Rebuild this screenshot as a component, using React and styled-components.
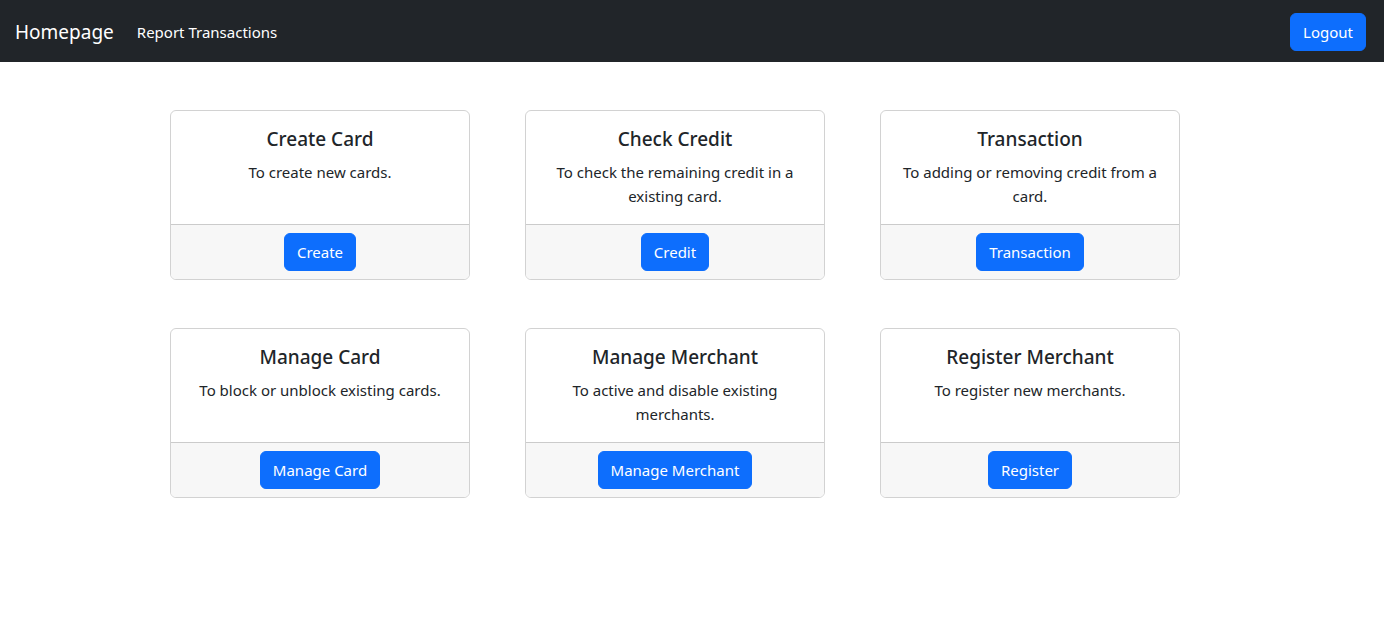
import React from "react";
import styled, { createGlobalStyle } from "styled-components";

const GlobalStyle = createGlobalStyle`
  body {
    margin: 0;
    background: #fff;
    color: #212529;
    font-family: "Noto Sans", "Open Sans", sans-serif;
    font-size: 15px;
    line-height: 24px;
  }
`;

const Navbar = styled.nav`
  height: 62px;
  background: #212529;
  display: flex;
  align-items: center;
  padding: 1px 18px 0 15px;
  box-sizing: border-box;
`;

const Brand = styled.a`
  color: #fff;
  font-size: 19px;
  line-height: 30px;
  text-decoration: none;
  margin-right: 23px;
`;

const NavLink = styled.a`
  color: #fff;
  font-size: 15px;
  text-decoration: none;
  flex: 1;
`;

const Button = styled.button`
  font-family: inherit;
  font-size: 15px;
  line-height: 24px;
  color: #fff;
  background: #0d6efd;
  border: 1px solid #0d6efd;
  border-radius: 6px;
  padding: 6px 12px;
  cursor: pointer;
`;

const Grid = styled.div`
  display: grid;
  grid-template-columns: repeat(3, 300px);
  column-gap: 55px;
  row-gap: 48px;
  padding: 48px 0 0 170px;
`;

const Card = styled.div`
  display: flex;
  flex-direction: column;
  border: 1px solid rgba(0, 0, 0, 0.175);
  border-radius: 6px;
  overflow: hidden;
  text-align: center;
`;

const CardBody = styled.div`
  flex: 1;
  padding: 16px;
`;

const Title = styled.h5`
  margin: 0 0 8px;
  font-size: 19px;
  font-weight: 500;
  line-height: 25px;
`;

const Text = styled.p`
  margin: 0;
`;

const CardFooter = styled.div`
  padding: 8px 16px;
  background: #f7f7f7;
  border-top: 1px solid rgba(0, 0, 0, 0.175);
`;

const items = [
  { title: "Create Card", text: "To create new cards.", action: "Create" },
  { title: "Check Credit", text: "To check the remaining credit in a existing card.", action: "Credit" },
  { title: "Transaction", text: "To adding or removing credit from a card.", action: "Transaction" },
  { title: "Manage Card", text: "To block or unblock existing cards.", action: "Manage Card" },
  { title: "Manage Merchant", text: "To active and disable existing merchants.", action: "Manage Merchant" },
  { title: "Register Merchant", text: "To register new merchants.", action: "Register" },
];

export default function App() {
  return (
    <>
      <GlobalStyle />
      <Navbar>
        <Brand href="#">Homepage</Brand>
        <NavLink href="#">Report Transactions</NavLink>
        <Button>Logout</Button>
      </Navbar>
      <Grid>
        {items.map((it) => (
          <Card key={it.title}>
            <CardBody>
              <Title>{it.title}</Title>
              <Text>{it.text}</Text>
            </CardBody>
            <CardFooter>
              <Button>{it.action}</Button>
            </CardFooter>
          </Card>
        ))}
      </Grid>
    </>
  );
}
